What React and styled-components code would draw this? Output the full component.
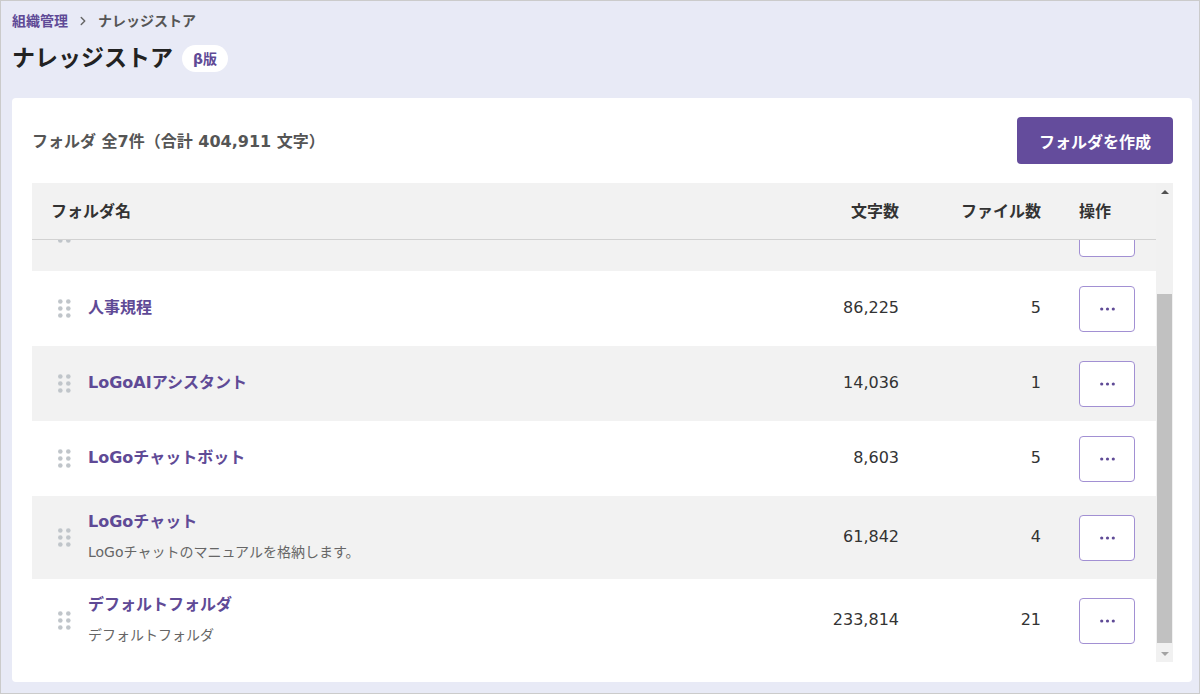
import { useLayoutEffect, useRef, useState } from 'react';
import styled, { createGlobalStyle } from 'styled-components';
import { ChevronRight } from 'lucide-react';

const GlobalStyle = createGlobalStyle`
  body {
    margin: 0;
    font-family: "DejaVu Sans", "Noto Sans CJK JP", sans-serif;
  }
`;

const Frame = styled.div`
  width: 1200px;
  height: 694px;
  box-sizing: border-box;
  border: 1px solid #cbcbcb;
  background-color: #e8eaf6;
  padding: 10px 7px 11px 11px;
  display: flex;
  flex-direction: column;
`;

const Breadcrumbs = styled.nav`
  display: flex;
  align-items: center;
  gap: 8px;
  height: 20px;
  font-size: 14px;
  font-weight: bold;
  line-height: 20px;
`;

const Crumb = styled.span`
  color: ${({ $current }) => ($current ? '#555' : '#5f4a96')};
`;

const TitleRow = styled.div`
  margin-top: 11px;
  display: flex;
  align-items: center;
  gap: 9px;
  height: 32px;
`;

const Title = styled.h1`
  margin: 0;
  font-size: 23px;
  line-height: 32px;
  font-weight: bold;
  color: #222;
`;

const Badge = styled.span`
  display: inline-flex;
  align-items: center;
  height: 27px;
  padding: 0 11px;
  border-radius: 14px;
  background-color: #fff;
  color: #5f4a96;
  font-size: 14px;
  font-weight: bold;
`;

const Card = styled.section`
  margin-top: 24px;
  flex: 1;
  min-height: 0;
  box-sizing: border-box;
  background-color: #fff;
  border-radius: 4px;
  padding: 19px 19px 20px 20px;
  display: flex;
  flex-direction: column;
`;

const CardHeader = styled.div`
  display: flex;
  align-items: center;
  justify-content: space-between;
  height: 47px;
`;

const Summary = styled.div`
  font-size: 16px;
  font-weight: bold;
  color: #555;
  padding-bottom: 2px;
`;

const CreateButton = styled.button`
  height: 47px;
  padding: 0 22px;
  border: none;
  border-radius: 4px;
  background-color: #644c9c;
  color: #fff;
  font-family: inherit;
  font-size: 16px;
  font-weight: bold;
`;

const TableArea = styled.div`
  margin-top: 19px;
  flex: 1;
  min-height: 0;
  display: flex;
`;

const Table = styled.div`
  flex: 1;
  min-width: 0;
  display: flex;
  flex-direction: column;
`;

const columns = '1fr 142px 142px 96px';

const HeaderRow = styled.div`
  display: grid;
  grid-template-columns: ${columns};
  align-items: center;
  height: 57px;
  flex-shrink: 0;
  box-sizing: border-box;
  padding-bottom: 3px;
  background-color: #f2f2f2;
  border-bottom: 1px solid #d2d2d2;
`;

const HeadCell = styled.div`
  padding: 0 19px;
  font-size: 16px;
  font-weight: bold;
  color: #333;
  text-align: ${({ $align }) => $align || 'left'};
`;

const Body = styled.div`
  flex: 1;
  min-height: 0;
  overflow: hidden;
`;

const Row = styled.div`
  display: grid;
  grid-template-columns: ${columns};
  align-items: center;
  min-height: 75px;
  background-color: #fff;
  &:nth-child(even) {
    background-color: #f2f2f2;
  }
`;

const NameCell = styled.div`
  padding: 14px 19px 16px;
  display: flex;
  align-items: center;
`;

const Handle = styled.svg`
  flex-shrink: 0;
  margin-left: 7px;
  margin-right: 17px;
  margin-top: 2px;
`;

const NameText = styled.div`
  display: flex;
  flex-direction: column;
  gap: 8px;
`;

const FolderName = styled.span`
  font-size: 16px;
  line-height: 24px;
  font-weight: bold;
  color: #5f4a96;
`;

const Description = styled.span`
  font-size: 14px;
  line-height: 21px;
  color: #666;
`;

const NumCell = styled.div`
  padding: 0 19px 3px;
  text-align: right;
  font-size: 16px;
  color: #333;
`;

const ActionCell = styled.div`
  padding: 0 19px;
`;

const MoreButton = styled.button`
  width: 56px;
  height: 46px;
  padding: 0;
  box-sizing: border-box;
  border: 1px solid #a290d3;
  border-radius: 4px;
  background-color: #fff;
  display: flex;
  align-items: center;
  justify-content: center;
`;

const ScrollBar = styled.div`
  width: 17px;
  flex-shrink: 0;
  background-color: #f1f1f1;
  display: flex;
  flex-direction: column;
`;

const ScrollArrow = styled.div`
  height: 17px;
  flex-shrink: 0;
  display: flex;
  align-items: center;
  justify-content: center;
  &::before {
    content: '';
    border-left: 4px solid transparent;
    border-right: 4px solid transparent;
    ${({ $down, $disabled }) =>
      `border-${$down ? 'top' : 'bottom'}: 4px solid ${$disabled ? '#a3a3a3' : '#505050'};`}
  }
`;

const ScrollTrack = styled.div`
  flex: 1;
  min-height: 0;
  padding: 0 1px 2px;
`;

const ScrollThumb = styled.div`
  background-color: #c1c1c1;
`;

const folders = [
  { name: 'テスト', chars: 215, files: 1 },
  { name: 'お知らせ', chars: 176, files: 1 },
  { name: '人事規程', chars: 86225, files: 5 },
  { name: 'LoGoAIアシスタント', chars: 14036, files: 1 },
  { name: 'LoGoチャットボット', chars: 8603, files: 5 },
  {
    name: 'LoGoチャット',
    description: 'LoGoチャットのマニュアルを格納します。',
    chars: 61842,
    files: 4,
  },
  { name: 'デフォルトフォルダ', description: 'デフォルトフォルダ', chars: 233814, files: 21 },
];

const DragIcon = () => (
  <Handle width="13" height="19" viewBox="0 0 13 19">
    {[2.5, 9.5, 16.5].map((cy) =>
      [2.3, 10.3].map((cx) => <circle key={`${cx}-${cy}`} cx={cx} cy={cy} r="2.3" fill="#c0c5ca" />)
    )}
  </Handle>
);

const MoreIcon = () => (
  <svg width="15" height="4" viewBox="0 0 15 4">
    <circle cx="1.7" cy="2" r="1.6" fill="#5f4a96" />
    <circle cx="7.5" cy="2" r="1.6" fill="#5f4a96" />
    <circle cx="13.3" cy="2" r="1.6" fill="#5f4a96" />
  </svg>
);

const App = () => {
  const bodyRef = useRef(null);
  const trackRef = useRef(null);
  const [thumb, setThumb] = useState({ top: 0, size: 0 });

  useLayoutEffect(() => {
    const body = bodyRef.current;
    const track = trackRef.current;
    if (!body || !track) return;
    body.scrollTop = body.scrollHeight;
    // the header sits beside the scrollbar too, so it counts toward the ratio
    const headerHeight = 57;
    const viewport = body.clientHeight + headerHeight;
    const content = body.scrollHeight + headerHeight;
    const trackLength = track.clientHeight - 2;
    const size = Math.round((trackLength * viewport) / content) - 6;
    const maxScroll = body.scrollHeight - body.clientHeight;
    const top = maxScroll > 0 ? ((trackLength - size) * body.scrollTop) / maxScroll : 0;
    setThumb({ top, size });
  }, []);

  const atBottom = thumb.size > 0;

  return (
    <Frame>
      <GlobalStyle />
      <Breadcrumbs>
        <Crumb>組織管理</Crumb>
        <ChevronRight size={14} color="#666" strokeWidth={2.5} />
        <Crumb $current>ナレッジストア</Crumb>
      </Breadcrumbs>
      <TitleRow>
        <Title>ナレッジストア</Title>
        <Badge>β版</Badge>
      </TitleRow>
      <Card>
        <CardHeader>
          <Summary>フォルダ 全7件（合計 404,911 文字）</Summary>
          <CreateButton>フォルダを作成</CreateButton>
        </CardHeader>
        <TableArea>
          <Table>
            <HeaderRow>
              <HeadCell>フォルダ名</HeadCell>
              <HeadCell $align="right">文字数</HeadCell>
              <HeadCell $align="right">ファイル数</HeadCell>
              <HeadCell>操作</HeadCell>
            </HeaderRow>
            <Body ref={bodyRef}>
              {folders.map((folder) => (
                <Row key={folder.name}>
                  <NameCell>
                    <DragIcon />
                    <NameText>
                      <FolderName>{folder.name}</FolderName>
                      {folder.description && <Description>{folder.description}</Description>}
                    </NameText>
                  </NameCell>
                  <NumCell>{folder.chars.toLocaleString('en-US')}</NumCell>
                  <NumCell>{folder.files}</NumCell>
                  <ActionCell>
                    <MoreButton>
                      <MoreIcon />
                    </MoreButton>
                  </ActionCell>
                </Row>
              ))}
            </Body>
          </Table>
          <ScrollBar>
            <ScrollArrow />
            <ScrollTrack ref={trackRef}>
              <ScrollThumb style={{ marginTop: thumb.top, height: thumb.size }} />
            </ScrollTrack>
            <ScrollArrow $down $disabled={atBottom} />
          </ScrollBar>
        </TableArea>
      </Card>
    </Frame>
  );
};

export default App;
